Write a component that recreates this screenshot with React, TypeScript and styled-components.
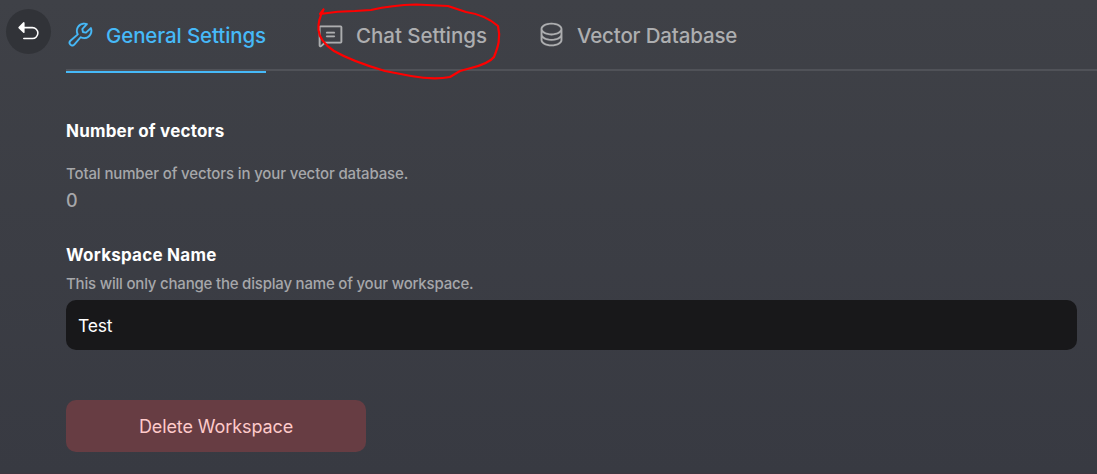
import React from "react";
import styled, { createGlobalStyle } from "styled-components";
import { PiArrowUUpLeftFill, PiWrench, PiChatText, PiDatabase } from "react-icons/pi";

const GlobalStyle = createGlobalStyle`
  * { box-sizing: border-box; }
  body { margin: 0; background: #383a42; font-family: Inter, "Plus Jakarta Sans", sans-serif; }
  button, input { font-family: inherit; }
`;

const Page = styled.main`
  position: relative;
  display: flex;
  flex-direction: column;
  height: 474px;
  overflow: hidden;
  border-bottom: 1px solid #3d3640;
  background: linear-gradient(180deg, #3f4147 0%, #383a42 100%);
`;

const Header = styled.header`
  display: flex;
  height: 73px;
  padding-left: 6px;
  gap: 15px;
`;

const BackButton = styled.button`
  display: flex;
  align-items: center;
  justify-content: center;
  width: 45px;
  height: 45px;
  margin-top: 9px;
  padding: 0;
  border: 0;
  border-radius: 50%;
  background: #313338;
  color: #fff;
`;

const Tabs = styled.nav`
  display: flex;
  flex: 1;
  height: 71px;
  gap: 50px;
  border-bottom: 2px solid #505258;
`;

const Tab = styled.a<{ $active?: boolean; $spacing: number }>`
  display: flex;
  flex: none;
  align-items: flex-start;
  gap: 11px;
  height: 73px;
  padding-top: 20px;
  border-bottom: 2px solid ${(p) => (p.$active ? "#46b9f8" : "transparent")};
  color: ${(p) => (p.$active ? "#46b9f8" : "#adaeb0")};
  font-size: 20.5px;
  font-weight: 500;
  line-height: 32px;
  letter-spacing: ${(p) => p.$spacing}px;
  white-space: nowrap;
  svg { flex: none; stroke-width: 1px; }
`;

const Content = styled.section`
  display: flex;
  flex-direction: column;
  align-items: flex-start;
  padding: 47px 20px 0 66px;
`;

const Label = styled.h2<{ $spacing: number }>`
  margin: 0;
  color: #fff;
  font-size: 17px;
  font-weight: 700;
  line-height: 22px;
  letter-spacing: ${(p) => p.$spacing}px;
`;

const Hint = styled.p<{ $top: number; $spacing: number }>`
  margin: ${(p) => p.$top}px 0 0;
  color: #a6a7aa;
  font-size: 15px;
  font-weight: 500;
  line-height: 20px;
  letter-spacing: ${(p) => p.$spacing}px;
`;

const Count = styled.p`
  margin: 5px 0 31px;
  color: #a6a7aa;
  font-size: 18px;
  font-weight: 500;
  line-height: 24px;
`;

const NameInput = styled.input`
  width: 100%;
  height: 50px;
  margin-top: 6px;
  padding: 0 12px;
  border: 0;
  border-radius: 10px;
  background: #18181a;
  color: #fff;
  font-size: 17.5px;
  letter-spacing: -0.2px;
`;

const DeleteButton = styled.button`
  width: 300px;
  height: 52px;
  margin-top: 50px;
  padding: 1px 0 0;
  border: 0;
  border-radius: 10px;
  background: #673d43;
  color: #fecaca;
  font-size: 18px;
  letter-spacing: -0.1px;
`;

const Annotation = styled.svg`
  position: absolute;
  top: 0;
  left: 300px;
  pointer-events: none;
`;

export default function App() {
  return (
    <Page>
      <GlobalStyle />
      <Header>
        <BackButton aria-label="Back"><PiArrowUUpLeftFill size={25} /></BackButton>
        <Tabs>
          <Tab $active $spacing={-0.11}><PiWrench size={29} />General Settings</Tab>
          <Tab $spacing={-0.03}><PiChatText size={29} />Chat Settings</Tab>
          <Tab $spacing={-0.16}><PiDatabase size={29} />Vector Database</Tab>
        </Tabs>
      </Header>
      <Content>
        <Label $spacing={0.2}>Number of vectors</Label>
        <Hint $top={22} $spacing={-0.13}>Total number of vectors in your vector database.</Hint>
        <Count>0</Count>
        <Label $spacing={0.24}>Workspace Name</Label>
        <Hint $top={8} $spacing={-0.2}>This will only change the display name of your workspace.</Hint>
        <NameInput defaultValue="Test" aria-label="Workspace Name" />
        <DeleteButton>Delete Workspace</DeleteButton>
      </Content>
      <Annotation width="220" height="90" viewBox="0 0 220 90" fill="none" stroke="#f00" strokeWidth="2.2" strokeLinecap="round" strokeLinejoin="round">
        <path d="M23.5 9.5L20 14C32 12 43 11 55 11L71 10C84 7 97 5 116 4.500L148 6L166 12C180 14 191 20 198 26C201 38 198 47 194 57C190 62 183 65 171 68L160 71L150 77C140 79 127 79 111 76L85 71C68 66 48 59 34 51C25 45 19 37 18.500 30C18 23 20 16 23.500 9.500" />
      </Annotation>
    </Page>
  );
}
